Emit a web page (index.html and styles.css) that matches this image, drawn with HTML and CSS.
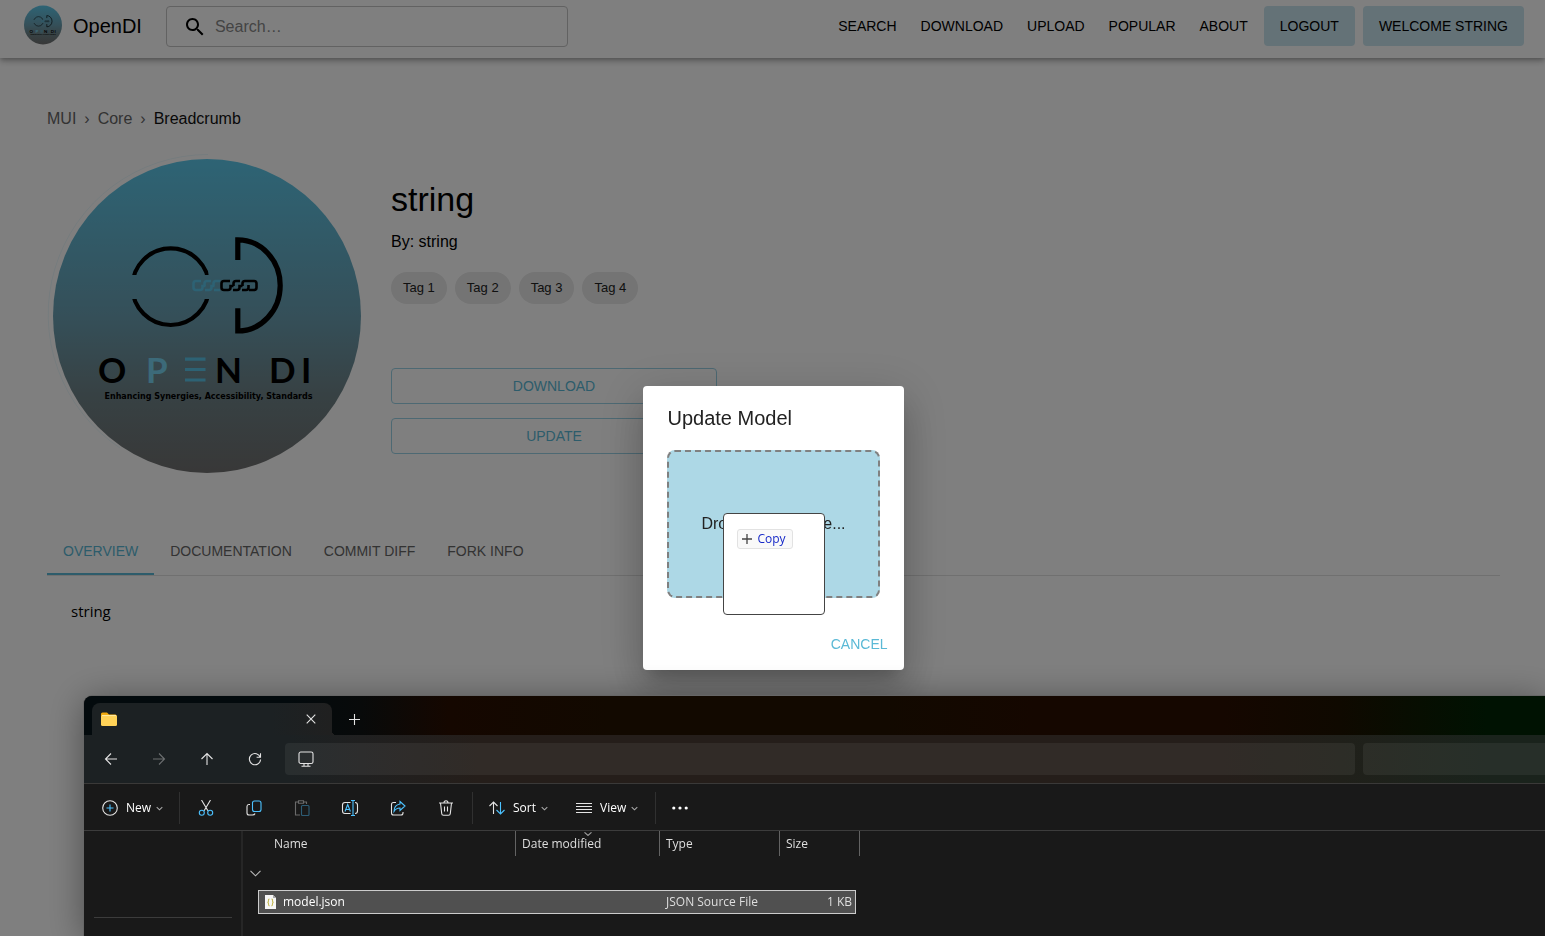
FILE: index.html
```html
<!DOCTYPE html>
<html lang="en">
<head>
<meta charset="utf-8">
<title>OpenDI</title>
<link rel="stylesheet" href="styles.css">
</head>
<body>
<svg class="defs" aria-hidden="true">
  <defs>
    <linearGradient id="disc" x1="0" y1="0" x2="0" y2="1">
      <stop offset="0" stop-color="#5cc8ea"/>
      <stop offset="0.5" stop-color="#6a9fb2"/>
      <stop offset="0.75" stop-color="#6f8388"/>
      <stop offset="1" stop-color="#707070"/>
    </linearGradient>
    <clipPath id="ring-gap"><path d="M125 240H208.500V275H125ZM125 299H216V335H125Z"/></clipPath>
    <symbol id="logo" viewBox="47 154 320 324">
      <path d="M208 154.500A160 160 0 0 0 120 448" fill="none" stroke="#5cc8ea" stroke-opacity="0.12"/>
      <ellipse cx="207" cy="316" rx="154" ry="157" fill="url(#disc)"/>
      <circle cx="170.700" cy="286.700" r="38.300" fill="none" stroke="#000" stroke-width="4.200" clip-path="url(#ring-gap)"/>
      <path d="M237.800 260V239.800A42.400 45.600 0 0 1 237.800 331V308.300" fill="none" stroke="#000" stroke-width="5.200"/>
      <g fill="none" stroke-width="2.600">
        <g stroke="#5ac4e8">
          <path d="M201 281h-5q-2.500 0-2.500 2.500v4q0 2.500 2.500 2.500h4q2.500 0 2.500-2.500V286h3"/>
          <path d="M211 281h-4q-2.500 0-2.500 2.500V286M205 290h4q2.500 0 2.500-2.500V286h3M220 281h-4q-2.500 0-2.500 2.500V286M214 290h6"/>
        </g>
        <g stroke="#000">
          <path d="M230 281h-6q-2.500 0-2.500 2.500v4q0 2.500 2.500 2.500h4q2.500 0 2.500-2.500V286h3"/>
          <path d="M240 281h-4q-2.500 0-2.500 2.500V286M233 290h4q2.500 0 2.500-2.500V286h3M248 281h-3q-2.500 0-2.500 2.500V286M242 290h4q2.500 0 2.500-2.500V285M246 281h8q2.500 0 2.500 2.500v4q0 2.500-2.500 2.500h-5"/>
        </g>
      </g>
      <g class="logo-word">
        <text x="98" y="382.500">O</text>
        <text x="146" y="382.500" class="logo-tint">P</text>
        <text x="215" y="382.500">N</text>
        <text x="269 301" y="382.500">DI</text>
      </g>
      <path d="M185 359.200h20.500M185 369.500h20.500M185 380h20.500" stroke="#5ac4e8" stroke-width="3.200"/>
      <text x="208.500" y="399" text-anchor="middle" class="logo-tag">Enhancing Synergies, Accessibility, Standards</text>
    </symbol>
  </defs>
</svg>

<div class="page">
  <header class="appbar">
    <a class="brand" href="#">
      <svg class="brand-logo" aria-hidden="true"><use href="#logo"/></svg>
      <span>OpenDI</span>
    </a>
    <label class="search">
      <svg width="24" height="24" viewBox="0 0 24 24" aria-hidden="true"><path d="M15.500 14h-.79l-.28-.27C15.410 12.590 16 11.110 16 9.500 16 5.910 13.090 3 9.500 3S3 5.910 3 9.500 5.910 16 9.500 16c1.610 0 3.090-.59 4.230-1.570l.27.28v.79l5 4.990L20.490 19zm-6 0C7.010 14 5 11.990 5 9.500S7.010 5 9.500 5 14 7.010 14 9.500 11.990 14 9.500 14"/></svg>
      <input type="text" placeholder="Search…" aria-label="Search">
    </label>
    <nav class="nav">
      <a href="#">SEARCH</a>
      <a href="#">DOWNLOAD</a>
      <a href="#">UPLOAD</a>
      <a href="#">POPULAR</a>
      <a href="#">ABOUT</a>
      <button type="button" class="nav-btn">LOGOUT</button>
      <button type="button" class="nav-btn">WELCOME STRING</button>
    </nav>
  </header>

  <main class="content">
    <nav class="crumbs" aria-label="breadcrumb">
      <a href="#">MUI</a><span>›</span><a href="#">Core</a><span>›</span><span class="current">Breadcrumb</span>
    </nav>
    <section class="model">
      <svg class="model-logo" role="img" aria-label="Open DI"><use href="#logo"/></svg>
      <div class="model-info">
        <h1>string</h1>
        <p class="author">By: string</p>
        <ul class="tags"><li>Tag 1</li><li>Tag 2</li><li>Tag 3</li><li>Tag 4</li></ul>
        <div class="actions">
          <button type="button">DOWNLOAD</button>
          <button type="button">UPDATE</button>
        </div>
      </div>
    </section>
    <div class="tabs" role="tablist">
      <button type="button" role="tab" aria-selected="true" class="selected">OVERVIEW</button>
      <button type="button" role="tab">DOCUMENTATION</button>
      <button type="button" role="tab">COMMIT DIFF</button>
      <button type="button" role="tab">FORK INFO</button>
    </div>
    <div class="panel" role="tabpanel">string</div>
  </main>
</div>

<div class="overlay">
  <section class="dialog" role="dialog" aria-labelledby="dlg-title">
    <h2 id="dlg-title">Update Model</h2>
    <div class="dropzone">
      <p>Drop the files here...</p>
      <div class="drag">
        <span class="drag-badge">
          <svg width="12" height="12" viewBox="0 0 12 12" aria-hidden="true"><path d="M6 1v10M1 6h10"/></svg>Copy
        </span>
      </div>
    </div>
    <div class="dialog-actions"><button type="button">CANCEL</button></div>
  </section>
</div>

<section class="explorer" aria-label="File Explorer">
  <div class="titlebar">
    <div class="wtab">
      <svg width="16" height="16" viewBox="0 0 16 16" aria-hidden="true"><path d="M0 3q0-1.500 1.500-1.500H6L8 3.500H14.500L16 5V9H0Z" fill="#f0a80c"/><rect y="4" width="16" height="11" rx="1.500" fill="#ffd257"/><path d="M1 4.500h14" stroke="#ffe9a0"/></svg>
      <button type="button" aria-label="Close tab"><svg width="10" height="10" viewBox="0 0 10 10"><path d="M.7.7l8.600 8.600M9.300.7L.7 9.300"/></svg></button>
    </div>
    <button type="button" class="newtab" aria-label="New tab"><svg width="11" height="11" viewBox="0 0 11 11"><path d="M5.500 0v11M0 5.500h11"/></svg></button>
  </div>
  <div class="addressbar">
    <button type="button" aria-label="Back"><svg width="16" height="16" viewBox="0 0 16 16"><path d="M14 8H2.500M8 2.500L2.500 8 8 13.500"/></svg></button>
    <button type="button" class="off" aria-label="Forward"><svg width="16" height="16" viewBox="0 0 16 16"><path d="M2 8h11.500M8 2.500L13.500 8 8 13.500"/></svg></button>
    <button type="button" aria-label="Up"><svg width="16" height="16" viewBox="0 0 16 16"><path d="M8 14V2.500M2.500 8L8 2.500 13.500 8"/></svg></button>
    <button type="button" aria-label="Refresh"><svg width="16" height="16" viewBox="0 0 16 16"><path d="M13.300 6.300A5.600 5.600 0 1 0 13.600 8.500M13.500 2.300V6.300H9.600"/></svg></button>
    <div class="address"><svg width="16" height="16" viewBox="0 0 16 16" aria-hidden="true"><rect x="1" y="1" width="14" height="11.500" rx="1.800"/><path d="M6 12.500v2.500M10 12.500v2.500M3.500 15.200h9"/></svg></div>
    <div class="find"></div>
  </div>
  <div class="toolbar">
    <button type="button" class="labelled new">
      <svg width="16" height="16" viewBox="0 0 16 16"><circle cx="8" cy="8" r="7.300"/><path class="blue" d="M8 4.500v7M4.500 8h7"/></svg>New
      <svg width="7" height="7" viewBox="0 0 7 7" class="dim"><path d="M.7 2.200l2.800 2.600 2.800-2.600"/></svg>
    </button>
    <i class="rule"></i>
    <div class="icons">
      <button type="button" aria-label="Cut"><svg width="16" height="16" viewBox="0 0 16 16"><path d="M3.500 0l6.400 10.800M12.500 0L6.100 10.800"/><g class="blue"><circle cx="3.800" cy="12.800" r="2.500"/><circle cx="12.200" cy="12.800" r="2.500"/></g></svg></button>
      <button type="button" aria-label="Copy"><svg width="16" height="16" viewBox="0 0 16 16"><path d="M4 4.500H2.800Q1 4.500 1 6.500V13Q1 15 3 15H6.500Q8.500 15 9 13.500"/><rect class="blue" x="6.500" y="1" width="8.500" height="10.500" rx="2"/></svg></button>
      <button type="button" class="off" aria-label="Paste"><svg width="16" height="16" viewBox="0 0 16 16"><path d="M6 15H1.500V2H4.500M9.500 2H12.500V4M4.500.8h5v2.400h-5z"/><rect class="blue" x="7.500" y="5.500" width="7.500" height="10" rx="1"/></svg></button>
      <button type="button" aria-label="Rename"><svg width="18" height="16" viewBox="0 0 18 16"><path d="M9.500 13.500H4Q1.500 13.500 1.500 11V5Q1.500 2.500 4 2.500H9.500M14 2.500Q16.500 2.500 16.500 5V11Q16.500 13.500 14 13.500"/><path class="blue" d="M12 .5v15M10 .5h4M10 15.500h4M4 11.500L6.700 4.500 9.400 11.500M5 9.500H8.500"/></svg></button>
      <button type="button" aria-label="Share"><svg width="16" height="16" viewBox="0 0 16 16"><path d="M6 2.500H3.500Q1.500 2.500 1.500 4.500V13Q1.500 15 3.500 15H11Q13 15 13 13V12"/><path class="blue" d="M10 1.500L15 6 10 10.500V8Q6 8 4 11.500 4 5 10 4Z"/></svg></button>
      <button type="button" aria-label="Delete"><svg width="16" height="16" viewBox="0 0 16 16"><path d="M1 3h14M6 3Q6 .8 8 .8T10 3M2.500 3L3.700 13.500Q3.800 15.200 5.500 15.200H10.500Q12.200 15.200 12.300 13.500L13.500 3M6.500 6.500V11.500M9.500 6.500V11.500"/></svg></button>
    </div>
    <i class="rule"></i>
    <button type="button" class="labelled sort">
      <svg width="16" height="16" viewBox="0 0 16 16"><path d="M4.500 14V2M.5 6l4-4 4 4"/><path class="blue" d="M11.500 2V14M7.500 10l4 4 4-4"/></svg>Sort
      <svg width="7" height="7" viewBox="0 0 7 7" class="dim"><path d="M.7 2.200l2.800 2.600 2.800-2.600"/></svg>
    </button>
    <button type="button" class="labelled">
      <svg width="16" height="16" viewBox="0 0 16 16"><path d="M0 3.500h16M0 6.500h16M0 9.500h16M0 12.500h16"/></svg>View
      <svg width="7" height="7" viewBox="0 0 7 7" class="dim"><path d="M.7 2.200l2.800 2.600 2.800-2.600"/></svg>
    </button>
    <i class="rule"></i>
    <button type="button" class="more" aria-label="More"><svg width="16" height="16" viewBox="0 0 16 16"><g class="dots"><circle cx="1.800" cy="8" r="1.600"/><circle cx="8" cy="8" r="1.600"/><circle cx="14.200" cy="8" r="1.600"/></g></svg></button>
  </div>
  <div class="files">
    <div class="sidebar"><hr></div>
    <table>
      <thead><tr>
        <th>Name</th>
        <th class="sorted">Date modified<svg width="8" height="4" viewBox="0 0 8 4" aria-hidden="true"><path d="M.5.3L4 3.500 7.500.3"/></svg></th>
        <th>Type</th>
        <th>Size</th>
      </tr></thead>
      <tbody>
        <tr class="group"><td><button type="button" aria-label="Collapse group"><svg width="11" height="7" viewBox="0 0 11 7"><path d="M.5.8l5 5 5-5"/></svg></button></td></tr>
        <tr class="file">
          <td><svg width="11" height="14" viewBox="0 0 11 14" aria-hidden="true"><path d="M0 0H8L11 3V14H0Z" fill="#f6f6f6"/><path d="M8 0V3H11Z" fill="#aaa"/><path class="braces" d="M4.500 4Q3.300 4 3.500 5.500T2.500 7.500Q3.600 7.500 3.500 9T4.500 11M6.500 4Q7.700 4 7.500 5.500T8.500 7.500Q7.400 7.500 7.500 9T6.500 11"/></svg>model.json</td>
          <td></td><td>JSON Source File</td><td class="size">1 KB</td>
        </tr>
      </tbody>
    </table>
  </div>
</section>
</body>
</html>
```
FILE: styles.css
```css
* { box-sizing: border-box; }
body {
  margin: 0;
  height: 100vh;
  overflow: hidden;
  background: #fff;
  color: #000;
  font-family: "Liberation Sans", Arial, sans-serif;
  font-size: 16px;
  line-height: 24px;
}
button {
  margin: 0;
  padding: 0;
  border: 0;
  background: none;
  color: inherit;
  font: inherit;
}
a { color: inherit; text-decoration: none; }
h1, h2, p, ul { margin: 0; padding: 0; font-weight: 400; }
svg { display: block; flex: none; }
.defs { position: absolute; width: 0; height: 0; }

.logo-word { font-family: Lato, sans-serif; font-size: 35px; font-weight: 700; }
.logo-tint { fill: #78d4f2; }
.logo-tag { font-family: "DejaVu Sans", sans-serif; font-size: 8px; font-weight: 700; }

/* App bar */
.appbar {
  display: flex;
  align-items: flex-start;
  height: 58px;
  padding: 5px 21px 0 23px;
  box-shadow: 0 2px 4px -1px rgba(0,0,0,.2), 0 4px 5px rgba(0,0,0,.14), 0 1px 10px rgba(0,0,0,.12);
}
.brand { display: flex; gap: 10px; font-size: 20px; line-height: 42px; }
.brand-logo { width: 40px; height: 40px; }
.search {
  display: flex;
  align-items: center;
  gap: 8px;
  width: 402px;
  height: 41px;
  margin: 1px 0 0 24px;
  padding: 0 16px;
  border: 1px solid #c4c4c4;
  border-radius: 4px;
}
.search input {
  flex: 1;
  min-width: 0;
  padding: 0;
  border: 0;
  outline: 0;
  background: none;
  font: inherit;
}
.search input::placeholder { color: #888; opacity: 1; }
.nav {
  display: flex;
  gap: 8px;
  margin: 1px 0 0 auto;
  font-size: 14px;
  line-height: 40px;
}
.nav a { padding: 0 8px; }
.nav-btn { padding: 0 16px; border-radius: 4px; background: #c8e4ee; }

/* Page content */
.content { padding: 49px 45px 0 47px; }
.crumbs { display: flex; gap: 8px; color: #666; }
.crumbs .current { color: #111; }
.model { display: flex; gap: 24px; margin-top: 23px; }
.model-logo { width: 320px; height: 324px; }
.model-info { flex: 1; max-width: 326px; padding-top: 24px; }
.model-info h1 { font-size: 34px; line-height: 42px; }
.author { margin-top: 10px; }
.tags { display: flex; gap: 8px; margin-top: 18px; list-style: none; font-size: 13px; line-height: 32px; }
.tags li { padding: 0 12px; border-radius: 16px; background: #e8e8e8; color: #222; }
.actions { display: flex; flex-direction: column; gap: 14px; margin-top: 64px; }
.actions button {
  height: 36px;
  border: 1px solid #9ad2e6;
  border-radius: 4px;
  color: #5ab9d6;
  font-size: 14px;
}
.tabs { display: flex; margin-top: 49px; border-bottom: 1px solid #e0e0e0; font-size: 14px; }
.tabs button { height: 48px; padding: 0 16px; color: #666; }
.tabs .selected { color: #5ab9d6; box-shadow: inset 0 -2px #5ab9d6; }
.panel { padding: 23px 24px; font-family: "Open Sans", "Noto Sans", sans-serif; font-size: 15px; }

/* Dialog */
.overlay {
  position: fixed;
  inset: 0;
  display: flex;
  justify-content: center;
  align-items: flex-start;
  padding: 386px 0 0 2px;
  background: rgba(0,0,0,.5);
}
.dialog {
  padding: 16px 8px 8px;
  border-radius: 4px;
  background: #fff;
  color: #222;
  box-shadow: 0 11px 15px -7px rgba(0,0,0,.2), 0 24px 38px 3px rgba(0,0,0,.14), 0 9px 46px 8px rgba(0,0,0,.12);
}
.dialog h2 { padding: 0 16px; font-size: 20px; line-height: 32px; }
.dropzone {
  position: relative;
  margin: 16px 16px 28px;
  padding: 60px 32px;
  border: 2px dashed #808080;
  border-radius: 8px;
  background: #add8e6;
}
.drag {
  position: absolute;
  left: 54px;
  top: 61px;
  width: 102px;
  height: 102px;
  padding: 14px 13px;
  border: 1px solid #444;
  border-radius: 4px;
  background: #fff;
}
.drag-badge {
  display: inline-flex;
  align-items: center;
  gap: 4px;
  height: 20px;
  padding: 0 6px 0 3px;
  border: 1px solid #e2e2e2;
  border-radius: 3px;
  background: #f9f9f9;
  color: #1528c8;
  font-family: "Open Sans", "Noto Sans", sans-serif;
  font-size: 12px;
}
.drag-badge svg { stroke: #444; stroke-width: 1.3; }
.dialog-actions { display: flex; justify-content: flex-end; }
.dialog-actions button { padding: 6px 8px; color: #5ab9d6; font-size: 14px; }

/* File explorer window */
.explorer {
  position: fixed;
  left: 84px;
  right: 0;
  top: 696px;
  bottom: 0;
  display: flex;
  flex-direction: column;
  border-radius: 8px 0 0 0;
  background: #191919;
  color: #fff;
  box-shadow: 0 0 0 1px #666, 0 4px 36px rgba(0,0,0,.4);
  font-family: "Open Sans", "Noto Sans", sans-serif;
  font-size: 12px;
  line-height: 16px;
}
.explorer svg { fill: none; stroke: #e4e4e4; stroke-width: 1.1; }
.explorer .wtab > svg, .explorer .file svg { stroke: none; }
.explorer .file .braces { stroke: #c4b955; }
.explorer button { display: flex; align-items: center; justify-content: center; }
.explorer .blue { stroke: #4cc2ff; }
.explorer .dots { fill: #fff; stroke: none; }
.explorer .dim { stroke: #aaa; }
.off svg { opacity: .4; }
.titlebar {
  display: flex;
  align-items: flex-end;
  height: 39px;
  padding-left: 8px;
  border-radius: 8px 0 0 0;
  background: linear-gradient(90deg, #030a0d 0, #030a0d 14%, #080a0a 19%, #150700 25%, #120900 36%, #120900 55%, #150700 65%, #150700 78%, #0f0900 86%, #001202 96%);
}
.wtab {
  position: relative;
  display: flex;
  align-items: center;
  justify-content: space-between;
  width: 240px;
  height: 32px;
  padding: 0 6px 0 9px;
  border-radius: 8px 8px 0 0;
  background: linear-gradient(90deg, #1c2123 75%, #202020);
}
.wtab::after {
  content: "";
  position: absolute;
  left: 100%;
  bottom: 0;
  width: 4px;
  height: 4px;
  background: radial-gradient(circle at 100% 0, transparent 4px, #202020 4px);
}
.wtab button { width: 30px; height: 30px; }
.newtab { width: 45px; height: 32px; }
.addressbar {
  display: flex;
  align-items: center;
  height: 49px;
  padding: 0 0 1px 3px;
  border-bottom: 1px solid #3a3938;
  background: linear-gradient(90deg, #1c2123 0, #1c2123 14%, #202020 19%, #251e1a 27%, #251e1a 78%, #20201a 86%, #1a231c 96%);
}
.addressbar button { width: 48px; height: 32px; }
.address, .find { height: 32px; border-radius: 4px; background: rgba(255,255,255,.06); }
.address { display: flex; flex: 1; align-items: center; margin: 0 8px 0 6px; padding: 0 13px; }
.find { width: 182px; border-radius: 4px 0 0 4px; }
.toolbar {
  display: flex;
  align-items: center;
  height: 47px;
  padding: 2px 0 0 10px;
  border-bottom: 1px solid #3c3c3c;
}
.toolbar .labelled { justify-content: flex-start; gap: 8px; width: 87px; height: 32px; padding: 0 8px; }
.toolbar .new { width: 85px; }
.toolbar .labelled .dim { margin-left: -3px; }
.toolbar .sort { margin-left: 8px; }
.rule { width: 1px; height: 32px; background: #303030; }
.icons { display: flex; margin: 0 2px; }
.icons button, .more { width: 48px; height: 32px; }
.files { display: flex; flex: 1; min-height: 0; }
.sidebar { width: 159px; padding: 86px 9px 0 10px; border-right: 2px solid #262626; }
.sidebar hr { margin: 0; border: 0; border-top: 1px solid #3c3c3c; }
table { display: block; margin-left: 7px; border-collapse: collapse; color: #dedede; }
thead, tbody { display: block; }
tr { display: grid; grid-template-columns: 266px 144px 120px 80px; }
th {
  padding: 5px 6px 4px;
  border-right: 1px solid #636363;
  font-weight: 400;
  text-align: left;
}
th:first-child { padding-left: 24px; }
.sorted { position: relative; }
.sorted svg { position: absolute; left: 68px; top: 1px; stroke: #999; }
td { padding: 0; }
.group { height: 34px; align-items: center; }
.group svg { stroke: #bbb; }
.file {
  grid-template-columns: 257px 144px 120px 1fr;
  align-items: center;
  width: 598px;
  height: 24px;
  margin-left: 8px;
  border: 1px solid #ccc;
  background: #505050;
}
.file td { padding-left: 6px; }
.file td:first-child { display: flex; align-items: center; gap: 7px; color: #fff; }
.file .size { padding: 0 3px 0 0; text-align: right; }
```
